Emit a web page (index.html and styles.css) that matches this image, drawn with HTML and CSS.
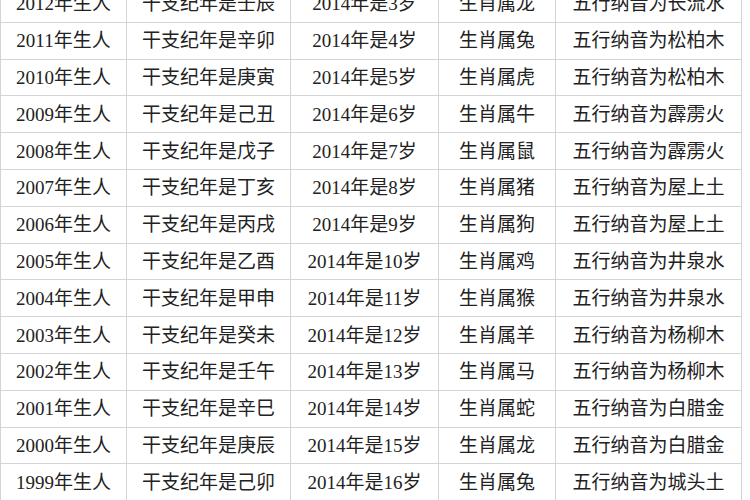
FILE: index.html
```html
<!DOCTYPE html>
<html lang="zh-CN">
<head>
<meta charset="utf-8">
<title>生肖年份表</title>
<link rel="stylesheet" href="styles.css">
</head>
<body>
<div class="frame">
<table class="zodiac">
<colgroup>
<col class="c1"><col class="c2"><col class="c3"><col class="c4"><col class="c5">
</colgroup>
<tbody>
<tr><td>2012年生人</td><td>干支纪年是壬辰</td><td>2014年是3岁</td><td>生肖属龙</td><td>五行纳音为长流水</td></tr>
<tr><td>2011年生人</td><td>干支纪年是辛卯</td><td>2014年是4岁</td><td>生肖属兔</td><td>五行纳音为松柏木</td></tr>
<tr><td>2010年生人</td><td>干支纪年是庚寅</td><td>2014年是5岁</td><td>生肖属虎</td><td>五行纳音为松柏木</td></tr>
<tr><td>2009年生人</td><td>干支纪年是己丑</td><td>2014年是6岁</td><td>生肖属牛</td><td>五行纳音为霹雳火</td></tr>
<tr><td>2008年生人</td><td>干支纪年是戊子</td><td>2014年是7岁</td><td>生肖属鼠</td><td>五行纳音为霹雳火</td></tr>
<tr><td>2007年生人</td><td>干支纪年是丁亥</td><td>2014年是8岁</td><td>生肖属猪</td><td>五行纳音为屋上土</td></tr>
<tr><td>2006年生人</td><td>干支纪年是丙戌</td><td>2014年是9岁</td><td>生肖属狗</td><td>五行纳音为屋上土</td></tr>
<tr><td>2005年生人</td><td>干支纪年是乙酉</td><td>2014年是10岁</td><td>生肖属鸡</td><td>五行纳音为井泉水</td></tr>
<tr><td>2004年生人</td><td>干支纪年是甲申</td><td>2014年是11岁</td><td>生肖属猴</td><td>五行纳音为井泉水</td></tr>
<tr><td>2003年生人</td><td>干支纪年是癸未</td><td>2014年是12岁</td><td>生肖属羊</td><td>五行纳音为杨柳木</td></tr>
<tr><td>2002年生人</td><td>干支纪年是壬午</td><td>2014年是13岁</td><td>生肖属马</td><td>五行纳音为杨柳木</td></tr>
<tr><td>2001年生人</td><td>干支纪年是辛巳</td><td>2014年是14岁</td><td>生肖属蛇</td><td>五行纳音为白腊金</td></tr>
<tr><td>2000年生人</td><td>干支纪年是庚辰</td><td>2014年是15岁</td><td>生肖属龙</td><td>五行纳音为白腊金</td></tr>
<tr><td>1999年生人</td><td>干支纪年是己卯</td><td>2014年是16岁</td><td>生肖属兔</td><td>五行纳音为城头土</td></tr>
</tbody>
</table>
</div>
</body>
</html>
```

FILE: styles.css
```css
html, body {
  margin: 0;
  padding: 0;
  background: #ffffff;
}

.frame {
  width: 750px;
  height: 500px;
  overflow: hidden;
}

.zodiac {
  margin-top: -15px;
  margin-left: 0;
  border-collapse: collapse;
  table-layout: fixed;
  width: 741px;
  font-family: "Liberation Serif", "Noto Sans CJK SC", serif;
  font-size: 19px;
  color: #222222;
}

.c1 { width: 126px; }
.c2 { width: 164px; }
.c3 { width: 148px; }
.c4 { width: 117px; }
.c5 { width: 186px; }

.zodiac tr {
  height: 36.8px;
}

.zodiac td {
  border: 1px solid #d4d4d4;
  padding: 0;
  text-align: center;
  vertical-align: middle;
  white-space: nowrap;
  line-height: 1;
}
```
